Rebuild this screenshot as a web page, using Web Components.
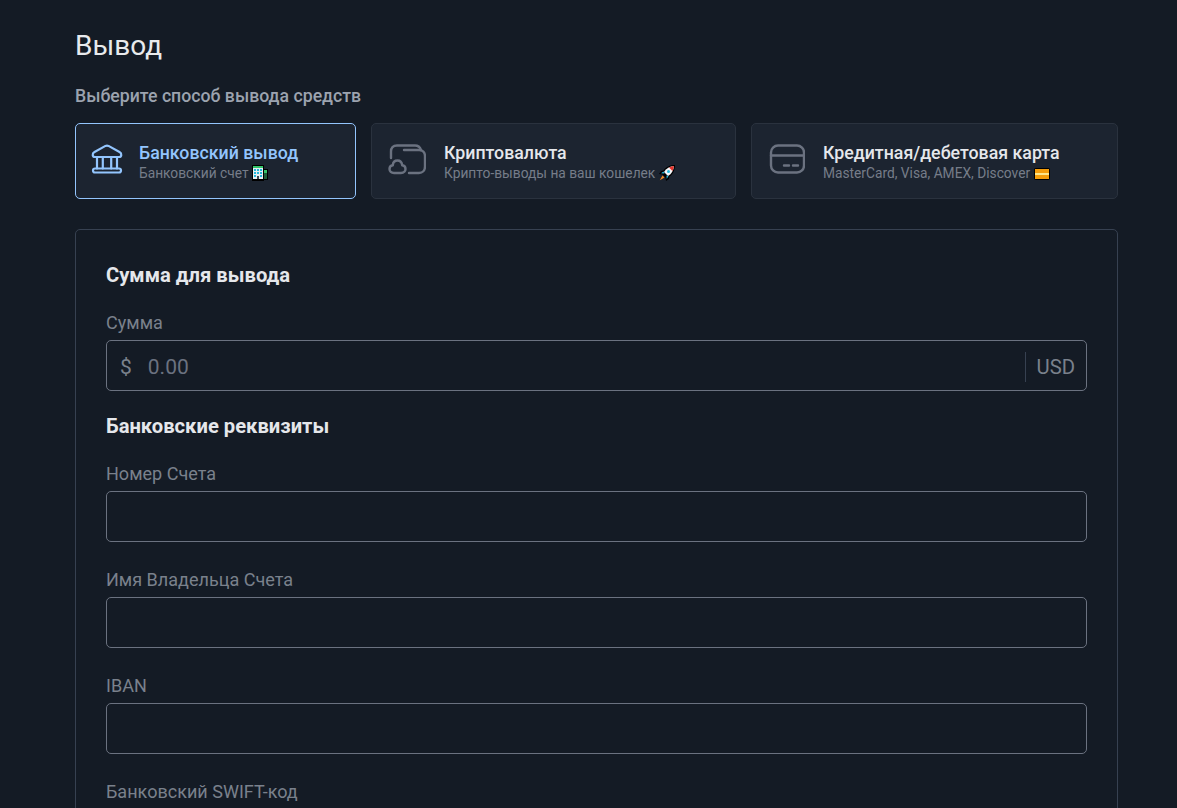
<!DOCTYPE html>
<html lang="ru">
<head>
<meta charset="utf-8">
<title>Вывод</title>
<style>
  html, body { margin: 0; height: 808px; overflow: hidden; background: #141b25; }
  body { font-family: Roboto, "Liberation Sans", sans-serif; }
  .emoji { display: inline-block; vertical-align: -3px; }
</style>
</head>
<body>
<withdraw-page>
  <method-card slot="methods" active title-text="Банковский вывод" pad="12" gap="15">
    <svg slot="icon" width="36" height="36" viewBox="0 0 36 36" fill="none" stroke="currentColor" stroke-width="2.200" stroke-linecap="round" stroke-linejoin="round">
      <path d="M20.500 2.900 L31.500 9 C34.200 10.500 33.700 14 31 14 H7 C4.300 14 3.800 10.500 6.500 9 L17.500 2.900 C18.500 2.400 19.500 2.400 20.500 2.900 Z"/>
      <path d="M9 14 V25.500 M14.800 14 V25.500 M23.200 14 V25.500 M29 14 V25.500"/>
      <rect x="5" y="25.500" width="28" height="4" rx="2"/>
    </svg>
    Банковский счет
    <svg class="emoji" width="16" height="16" viewBox="0 0 16 16">
      <rect x="0" y="0" width="12" height="16" fill="#000"/>
      <rect x="11" y="4" width="5" height="11" fill="#000"/>
      <rect x="1" y="1" width="10" height="2" fill="#35c46a"/>
      <rect x="1" y="3" width="10" height="11" fill="#e6eef2"/>
      <path d="M2 4h2v2H2zM5 4h2v2H5zM8 4h2v2H8zM2 7h2v2H2zM5 7h2v2H5zM8 7h2v2H8zM2 10h2v2H2zM8 10h2v2H8z" fill="#22b8dc"/>
      <rect x="5" y="11" width="2" height="3" fill="#3a4650"/>
      <rect x="12" y="5" width="3" height="3" fill="#35c46a"/>
      <rect x="12" y="8" width="3" height="6" fill="#1c5e3a"/>
    </svg>
  </method-card>
  <method-card slot="methods" title-text="Криптовалюта" pad="16" gap="18">
    <svg slot="icon" width="38" height="36" viewBox="0 0 38 36" fill="none" stroke="currentColor" stroke-width="2.400" stroke-linecap="round" stroke-linejoin="round">
      <path d="M3 15 V8.500 C3 4.800 5 2.500 9 2.500 H27 C30.500 2.500 32 4 33 7"/>
      <path d="M16 7 H31 C34.500 7 37 9.500 37 13 V23.500 C37 27.500 34.500 30 31 30 H21"/>
      <path d="M6 30 H13 C16 30 17.500 28 17.500 26 C17.500 23.800 16 22.500 14.200 22.300 C13.800 19 11.800 17.500 9.500 17.500 C7 17.500 5 19.200 4.800 22.300 C2.800 22.600 1.500 24 1.500 26 C1.500 28.200 3.300 30 6 30 Z"/>
    </svg>
    Крипто-выводы на ваш кошелек
    <svg class="emoji" width="16" height="16" viewBox="0 0 16 16">
      <path d="M16 0 C11 0 6.500 2 4.500 5.500 L2 6 L0 9 L3.500 9.500 L6.500 12.500 L7 16 L10 14 L10.500 11.500 C14 9.500 16 5 16 0Z" fill="#000"/>
      <path d="M15 1 C11 1.300 7 3.300 5 7 L9 11 C12.700 9 14.700 5 15 1Z" fill="#f4f7f9"/>
      <path d="M15 1 C13.300 1.200 11.500 1.700 10 2.500 L13.500 6 C14.300 4.500 14.800 2.700 15 1Z" fill="#e5352d"/>
      <path d="M2 8.300 L4.500 6.500 L5.500 8.500Z M9.500 11 L7.700 14 L7.500 10.500Z" fill="#22b8dc"/>
      <circle cx="9.500" cy="6.500" r="1.500" fill="#22b8dc"/>
      <path d="M3.500 10.500 L5.500 12.500 L.8 15.200Z" fill="#f08a24"/>
    </svg>
  </method-card>
  <method-card slot="methods" title-text="Кредитная/дебетовая карта" pad="17" gap="18">
    <svg slot="icon" width="36" height="36" viewBox="0 0 36 36" fill="none" stroke="currentColor" stroke-width="2.400" stroke-linecap="round">
      <rect x="2" y="2.500" width="33" height="27" rx="7"/>
      <path d="M2 12.500 H35"/>
      <path d="M15 22.500 H20 M24 22.500 H29"/>
    </svg>
    MasterCard, Visa, AMEX, Discover
    <svg class="emoji" width="16" height="12" viewBox="0 0 16 12" style="vertical-align:-2px">
      <rect x="0" y="0" width="16" height="12" rx="2" fill="#000"/>
      <rect x="1" y="1" width="14" height="10" fill="#f59e0b"/>
      <rect x="1" y="5" width="14" height="2" fill="#fde68a"/>
    </svg>
  </method-card>

  <section-title>Сумма для вывода</section-title>
  <form-field label="Сумма" prefix="$" placeholder="0.00" suffix="USD"></form-field>
  <section-title>Банковские реквизиты</section-title>
  <form-field label="Номер Счета"></form-field>
  <form-field label="Имя Владельца Счета"></form-field>
  <form-field label="IBAN"></form-field>
  <form-field label="Банковский SWIFT-код"></form-field>
</withdraw-page>

<script>
class WithdrawPage extends HTMLElement {
  constructor() {
    super();
    this.shadowDOM = this.attachShadow({mode: "open"});
    this.shadowDOM.innerHTML = `
      <style>
        :host {
          display: block;
          box-sizing: border-box;
          height: 808px;
          overflow: hidden;
          padding: 26px 59px 0 75px;
          color: #e5e7eb;
        }
        h1 {
          margin: 0;
          font-size: 28px;
          line-height: 40px;
          font-weight: 400;
          color: #e8eaed;
        }
        p {
          margin: 18px 0 0;
          font-size: 17.7px;
          line-height: 24px;
          font-weight: 500;
          color: #9ca3af;
        }
        .methods {
          display: grid;
          grid-template-columns: 281px 365px 367px;
          column-gap: 15px;
          margin-top: 15px;
        }
        .panel {
          margin-top: 30px;
          padding: 30px 30px 0;
          border: 1px solid #374151;
          border-radius: 5px;
        }
      </style>
      <h1>Вывод</h1>
      <p>Выберите способ вывода средств</p>
      <div class="methods"><slot name="methods"></slot></div>
      <div class="panel"><slot></slot></div>
    `;
  }
}

class MethodCard extends HTMLElement {
  constructor() {
    super();
    this.shadowDOM = this.attachShadow({mode: "open"});
  }

  connectedCallback() {
    this.shadowDOM.innerHTML = `
      <style>
        :host {
          display: flex;
          align-items: center;
          box-sizing: border-box;
          height: 76px;
          padding-left: ${this.getAttribute("pad")}px;
          background: #1c2430;
          border: 1px solid #2a323e;
          border-radius: 5px;
          color: #6b7280;
        }
        :host([active]) {
          border-color: #93c5fd;
          color: #93c5fd;
        }
        .icon { display: flex; margin-right: ${this.getAttribute("gap")}px; }
        .text { margin-top: 2px; }
        .title {
          font-size: 17.75px;
          line-height: 22px;
          font-weight: 500;
          color: #e5e7eb;
        }
        :host([active]) .title { color: #93c5fd; }
        .sub {
          font-size: 13.75px;
          line-height: 18px;
          color: #767d89;
          white-space: nowrap;
        }
      </style>
      <div class="icon"><slot name="icon"></slot></div>
      <div class="text">
        <div class="title">${this.getAttribute("title-text")}</div>
        <div class="sub"><slot></slot></div>
      </div>
    `;
  }
}

class SectionTitle extends HTMLElement {
  constructor() {
    super();
    this.shadowDOM = this.attachShadow({mode: "open"});
    this.shadowDOM.innerHTML = `
      <style>
        :host {
          display: block;
          margin-bottom: 20px;
          font-size: 20.2px;
          line-height: 30px;
          font-weight: 700;
          color: #e5e7eb;
        }
      </style>
      <slot></slot>
    `;
  }
}

class FormField extends HTMLElement {
  constructor() {
    super();
    this.shadowDOM = this.attachShadow({mode: "open"});
  }

  connectedCallback() {
    const prefix = this.getAttribute("prefix");
    const suffix = this.getAttribute("suffix");
    const placeholder = this.getAttribute("placeholder") || "";
    this.shadowDOM.innerHTML = `
      <style>
        :host {
          display: block;
          margin-bottom: 25px;
        }
        :host([suffix]) { margin-bottom: 20px; }
        label {
          display: block;
          font-size: 18.05px;
          line-height: 26px;
          color: #7a818c;
        }
        .box {
          display: flex;
          align-items: center;
          box-sizing: border-box;
          height: 51px;
          margin-top: 4px;
          padding-top: 2px;
          border: 1px solid #6b7280;
          border-radius: 5px;
          font-size: 21px;
          color: #7a818c;
        }
        .prefix { padding: 0 16px 0 13px; }
        input {
          flex: 1;
          min-width: 0;
          padding: 0;
          border: 0;
          outline: 0;
          background: transparent;
          font: inherit;
          color: #e5e7eb;
        }
        input::placeholder { color: #6b7280; opacity: 1; }
        .suffix {
          display: flex;
          align-items: center;
          height: 30px;
          padding: 0 11px 0 10px;
          border-left: 1px solid #374151;
          font-size: 20.3px;
        }
      </style>
      <label>${this.getAttribute("label")}</label>
      <div class="box">
        ${prefix ? `<span class="prefix">${prefix}</span>` : ""}
        <input type="text" placeholder="${placeholder}">
        ${suffix ? `<span class="suffix">${suffix}</span>` : ""}
      </div>
    `;
  }
}

customElements.define("withdraw-page", WithdrawPage);
customElements.define("method-card", MethodCard);
customElements.define("section-title", SectionTitle);
customElements.define("form-field", FormField);
</script>
</body>
</html>
